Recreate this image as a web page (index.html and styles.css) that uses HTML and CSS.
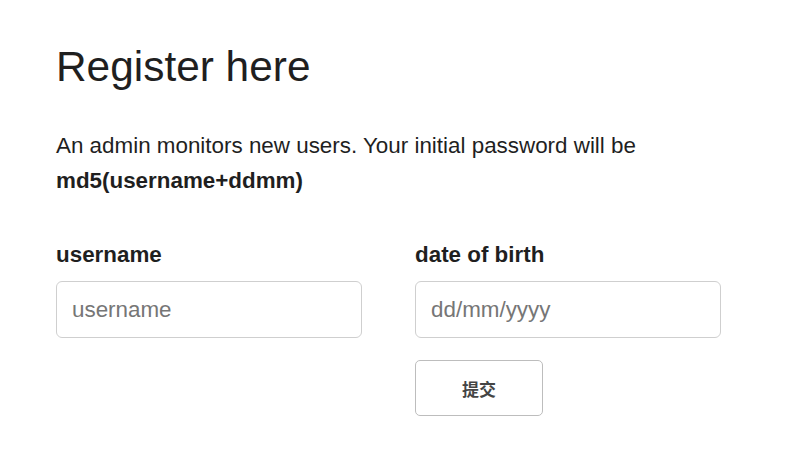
FILE: index.html
```html
<!DOCTYPE html>
<html lang="en">
<head>
<meta charset="UTF-8">
<meta name="viewport" content="width=device-width, initial-scale=1.0">
<title>Register</title>
<link rel="stylesheet" href="styles.css">
</head>
<body>

<div class="page">
    <h1 class="title">Register here</h1>

    <p class="intro">
        An admin monitors new users. Your initial password will be<br>
        <b>md5(username+ddmm)</b>
    </p>

    <form class="register-form" onsubmit="return false">
        <div class="field">
            <label for="username">username</label>
            <input type="text" id="username" name="username" placeholder="username">
        </div>
        <div class="field">
            <label for="dob">date of birth</label>
            <input type="text" id="dob" name="dob" placeholder="dd/mm/yyyy">
        </div>
        <button type="submit" class="submit-button">提交</button>
    </form>
</div>

</body>
</html>
```

FILE: styles.css
```css
body {
    margin: 0;
    background-color: #ffffff;
    color: #1f1f1f;
    font-family: "Liberation Sans", Arial, "Noto Sans CJK SC", sans-serif;
}

.page {
    padding: 42px 0 0 56px;
}

.title {
    margin: 0 0 36px 0;
    font-size: 42.4px;
    font-weight: normal;
    line-height: 50px;
}

.intro {
    margin: 0 0 42px 0;
    font-size: 22.4px;
    line-height: 35px;
}

.register-form {
    display: grid;
    grid-template-columns: 306px 306px;
    column-gap: 53px;
    row-gap: 22px;
}

.field label {
    display: block;
    margin-bottom: 11px;
    font-size: 22.4px;
    font-weight: bold;
    line-height: 30px;
}

.field input {
    box-sizing: border-box;
    width: 306px;
    height: 57px;
    padding: 0 15px;
    border: 1px solid #cfcfcf;
    border-radius: 6px;
    font-family: "Liberation Sans", Arial, sans-serif;
    font-size: 22.4px;
    color: #1f1f1f;
    outline: none;
}

.field input::placeholder {
    color: #767676;
}

.submit-button {
    grid-column: 2;
    width: 128px;
    height: 56px;
    background-color: #ffffff;
    border: 1px solid #bdbdbd;
    border-radius: 5px;
    color: #444444;
    font-family: "Noto Sans CJK SC", sans-serif;
    font-size: 17px;
    font-weight: bold;
    cursor: pointer;
}
```
